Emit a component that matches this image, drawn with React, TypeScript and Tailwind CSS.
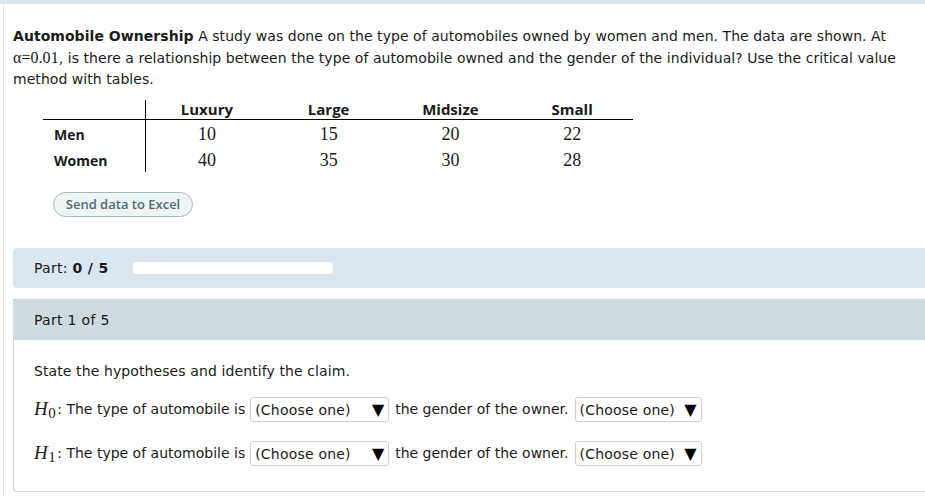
import { ReactNode } from "react";

const verdana = { fontFamily: '"DejaVu Sans", Verdana, sans-serif' };
const serif = { fontFamily: '"Liberation Serif", "Times New Roman", serif' };

const columns = ["Luxury", "Large", "Midsize", "Small"];
const rows = [
  { label: "Men", values: [10, 15, 20, 22] },
  { label: "Women", values: [40, 35, 30, 28] },
];

function Select({ width }: { width: string }) {
  return (
    <div
      className={`${width} h-[25px] flex items-center justify-between border border-[#cfcfcf] rounded-[3px] bg-white pl-[4px] pr-[4px] shrink-0`}
    >
      <span className="text-[14px] text-[#1a1a1a] pt-[2px] tracking-[0.2px]">(Choose one)</span>
      <span className="text-[16px] text-black">▼</span>
    </div>
  );
}

function Hypothesis({ sub }: { sub: ReactNode }) {
  return (
    <div className="flex items-center h-[25px]">
      <span className="text-[19px] italic mr-[1px] tracking-[0.5px]" style={serif}>
        H<sub className="text-[15px] not-italic relative top-[3px]">{sub}</sub>
      </span>
      <span>: The type of automobile is</span>
      <div className="ml-[5px]">
        <Select width="w-[139px]" />
      </div>
      <span className="ml-[6px]">the gender of the owner.</span>
      <div className="ml-[6px]">
        <Select width="w-[127px]" />
      </div>
    </div>
  );
}

export default function App() {
  return (
    <div
      className="w-[925px] h-[496px] bg-white overflow-hidden text-[14px] text-[#1a1a1a]"
      style={verdana}
    >
      <div className="h-[4px] bg-[#dfe6ea]" />
      <div className="ml-[3px] border-l border-[#e2e7ea] h-[492px] pl-[9px] pt-[22px]">
        <p className="leading-[21px] tracking-[0.05px]">
          <b>Automobile Ownership</b> A study was done on the type of automobiles owned by
          women and men. The data are shown. At
          <br />
          <span className="text-[16px]" style={serif}>
            α=0.01
          </span>
          , is there a relationship between the type of automobile owned and the gender of
          the individual? Use the critical value
          <br />
          method with tables.
        </p>

        {/* data table */}
        <div className="ml-[30px] mt-[10px] w-[590px]">
          <div className="flex h-[20px] border-b border-black">
            <div className="w-[103px] border-r border-black" />
            {columns.map((c) => (
              <div
                key={c}
                className="flex-1 text-center text-[15px] font-bold leading-[18px]"
                style={{ fontFamily: '"Open Sans", sans-serif' }}
              >
                {c}
              </div>
            ))}
          </div>
          {rows.map((r) => (
            <div key={r.label} className="flex h-[26px] items-center">
              <div
                className="w-[103px] h-full flex items-center pl-[11px] pt-[2px] border-r border-black text-[14px] font-bold"
                style={{ fontFamily: '"Open Sans", sans-serif' }}
              >
                {r.label}
              </div>
              {r.values.map((v, i) => (
                <div key={i} className="flex-1 text-center text-[18px] pt-[3px]" style={serif}>
                  {v}
                </div>
              ))}
            </div>
          ))}
        </div>

        <button
          className="ml-[40px] mt-[20px] w-[140px] h-[25px] rounded-full border border-[#a8bbbe] bg-[#eff4f5] text-[13px] font-semibold text-[#4b6d74]"
          style={{ fontFamily: '"Open Sans", sans-serif' }}
        >
          Send data to Excel
        </button>

        {/* progress */}
        <div className="mt-[31px] h-[40px] bg-[#d9e6f0] rounded-l-[4px] flex items-center pl-[21px]">
          <span className="tracking-[0.3px]">
            Part: <b>0 / 5</b>
          </span>
          <div className="ml-[25px] w-[200px] h-[12px] bg-white rounded-[2px]" />
        </div>

        {/* part card */}
        <div className="mt-[11px] rounded-bl-[4px] border-b border-l border-[#cddadf]">
          <div className="h-[41px] bg-[#cddadf] flex items-center pl-[21px] pt-[2px] -ml-px tracking-[0.3px]">
            Part 1 of 5
          </div>
          <div className="pl-[20px] pt-[21px] h-[151px]">
            <div className="leading-[21px] tracking-[0.1px]">
              State the hypotheses and identify the claim.
            </div>
            <div className="mt-[15px]">
              <Hypothesis sub="0" />
            </div>
            <div className="mt-[19px]">
              <Hypothesis sub="1" />
            </div>
          </div>
        </div>
      </div>
    </div>
  );
}
